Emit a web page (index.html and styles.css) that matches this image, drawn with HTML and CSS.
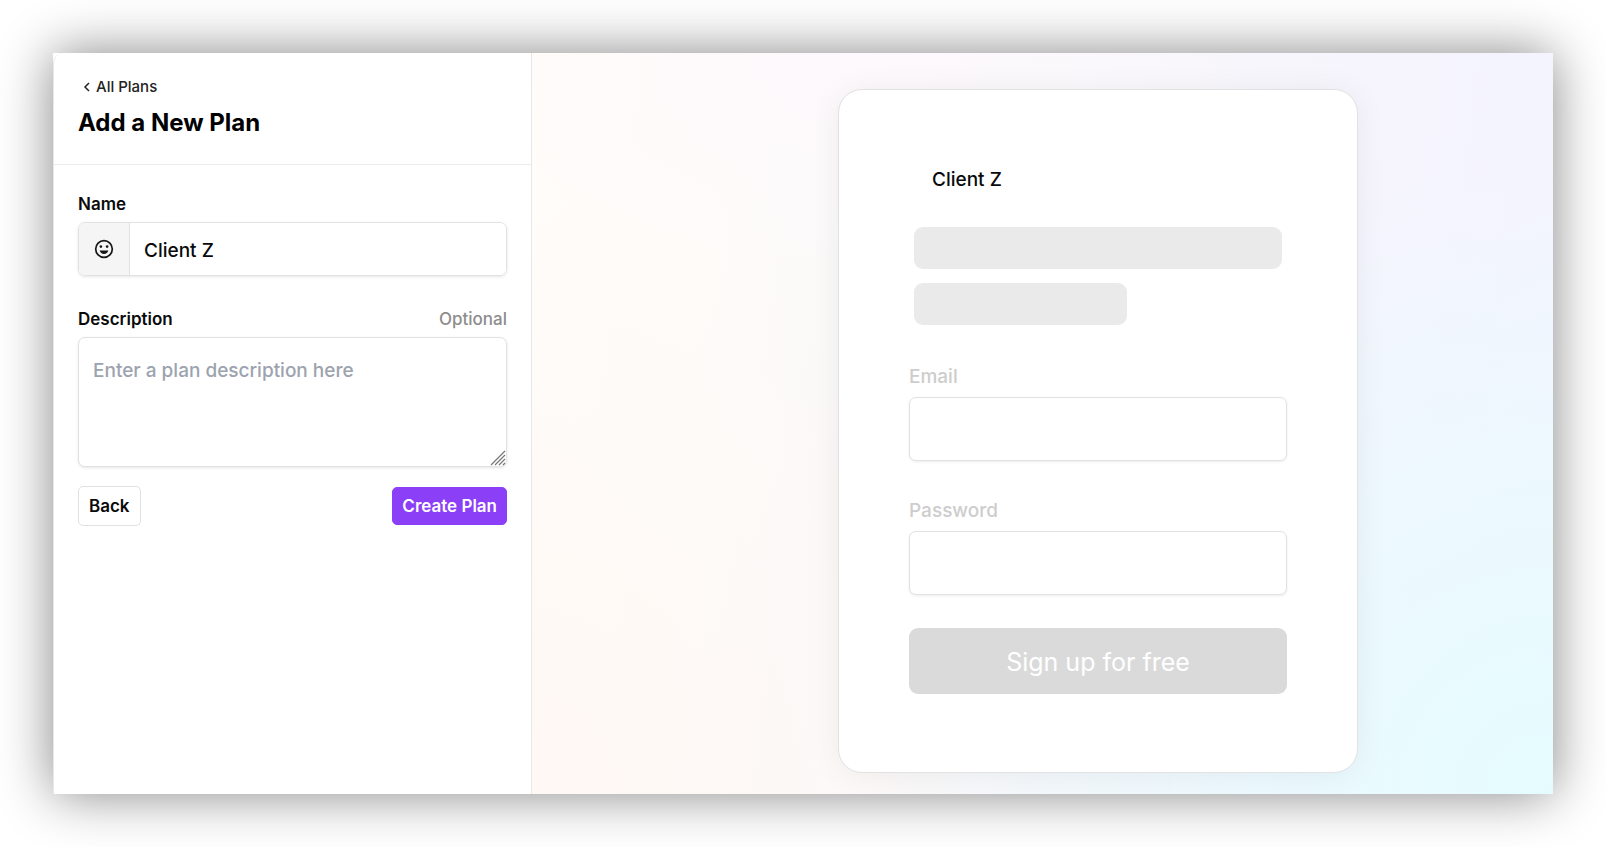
FILE: index.html
```html
<!DOCTYPE html>
<html lang="en">
<head>
<meta charset="utf-8">
<meta name="viewport" content="width=device-width, initial-scale=1">
<title>Add a New Plan</title>
<link rel="stylesheet" href="styles.css">
</head>
<body>
<div class="window">
  <main class="editor">
    <header class="editor-header">
      <a class="back-link" href="#plans">
        <svg class="chevron" viewBox="0 0 8 12" aria-hidden="true"><path d="M6 2 2 6l4 4"/></svg>
        All Plans
      </a>
      <h1 class="title">Add a New Plan</h1>
    </header>
    <form class="plan-form">
      <div class="field">
        <div class="label-row"><label for="name">Name</label></div>
        <div class="name-group">
          <button class="emoji-button" type="button" aria-label="Choose an emoji">
            <svg class="smiley" viewBox="0 0 20 20" aria-hidden="true">
              <circle class="smiley-face" cx="10" cy="10" r="8.3"/>
              <circle cx="6.900" cy="7.600" r="1.300"/>
              <circle cx="13.100" cy="7.600" r="1.300"/>
              <path d="M5.700 11.400h8.600c-.5 2.200-2.200 3.500-4.300 3.500s-3.800-1.300-4.300-3.500z"/>
            </svg>
          </button>
          <input class="name-input" id="name" type="text" value="Client Z">
        </div>
      </div>
      <div class="field">
        <div class="label-row">
          <label for="description">Description</label>
          <span class="optional">Optional</span>
        </div>
        <div class="description-group">
          <textarea class="description" id="description" placeholder="Enter a plan description here"></textarea>
          <svg class="grip" viewBox="0 0 16 16" aria-hidden="true"><path d="M1 15 15 1M5 15 15 5M9 15l6-6M13 15l2-2"/></svg>
        </div>
      </div>
      <div class="actions">
        <button class="button" type="button">Back</button>
        <button class="button button-primary" type="submit">Create Plan</button>
      </div>
    </form>
  </main>
  <section class="preview" aria-label="Preview">
    <form class="card">
      <p class="plan-name">Client Z</p>
      <div class="placeholder"></div>
      <div class="placeholder placeholder-short"></div>
      <div class="signup-fields">
        <div class="signup-field">
          <label for="email">Email</label>
          <input class="signup-input" id="email" type="email">
        </div>
        <div class="signup-field">
          <label for="password">Password</label>
          <input class="signup-input" id="password" type="password">
        </div>
      </div>
      <button class="signup-button" type="button">Sign up for free</button>
    </form>
  </section>
</div>
</body>
</html>
```
FILE: styles.css
```css
*,
*::before,
*::after {
  box-sizing: border-box;
}

body {
  display: flex;
  min-height: 100vh;
  margin: 0;
  padding: 53px;
  background: #fff;
  color: #0a0a0a;
  font-family: Inter, "Liberation Sans", sans-serif;
}

button,
input,
textarea {
  margin: 0;
  color: inherit;
  font: inherit;
}

.window {
  display: flex;
  flex: 1;
  background: #fff;
  box-shadow: 0 0 50px rgba(0, 0, 0, 0.48);
}

.editor {
  flex: 0 0 479px;
  border-right: 1px solid #e8e8e8;
  border-left: 1px solid #e8e8e8;
  border-top-left-radius: 10px;
}

.editor-header {
  height: 112px;
  padding: 22px 24px 0;
  border-bottom: 1px solid #ececec;
}

.back-link {
  display: flex;
  align-items: center;
  gap: 5px;
  padding-left: 5px;
  color: #222;
  font-size: 15px;
  font-weight: 500;
  line-height: 24px;
  text-decoration: none;
}

.chevron {
  width: 8px;
  height: 12px;
  fill: none;
  stroke: #222;
  stroke-width: 1.5;
}

.title {
  margin: 6px 0 0;
  color: #000;
  font-size: 24px;
  font-weight: 700;
  line-height: 36px;
}

.plan-form {
  padding: 27px 24px;
}

.field {
  margin-bottom: 31px;
}

.label-row {
  display: flex;
  justify-content: space-between;
  margin-bottom: 6px;
  font-size: 17px;
  font-weight: 600;
  line-height: 24px;
}

.optional {
  color: #8c8c8c;
  font-weight: 500;
}

.name-group {
  display: flex;
  height: 54px;
  overflow: hidden;
  border: 1px solid #e2e2e2;
  border-radius: 7px;
  box-shadow: 0 1px 3px rgba(0, 0, 0, 0.1);
}

.emoji-button {
  display: flex;
  align-items: center;
  justify-content: center;
  flex: 0 0 51px;
  padding: 0;
  border: 0;
  border-right: 1px solid #e2e2e2;
  background: #f5f5f5;
}

.smiley {
  width: 20px;
  height: 20px;
  fill: #171717;
}

.smiley-face {
  fill: none;
  stroke: #171717;
  stroke-width: 1.7;
}

.name-input {
  flex: 1;
  min-width: 0;
  padding: 2px 14px 0;
  border: 0;
  background: #fff;
  font-size: 19px;
  font-weight: 500;
}

.description-group {
  position: relative;
}

.description {
  display: block;
  width: 100%;
  height: 130px;
  padding: 19px 14px;
  border: 1px solid #e2e2e2;
  border-radius: 7px;
  box-shadow: 0 1px 3px rgba(0, 0, 0, 0.1);
  font-size: 19px;
  font-weight: 500;
  line-height: 28px;
  resize: none;
}

.description::placeholder {
  color: #9ca3af;
}

.grip {
  position: absolute;
  right: 1px;
  bottom: 1px;
  width: 16px;
  height: 16px;
  fill: none;
  stroke: #777;
  stroke-width: 1.2;
  pointer-events: none;
}

.actions {
  display: flex;
  align-items: center;
  justify-content: space-between;
  margin-top: -12px;
}

.button {
  height: 40px;
  padding: 0 10px;
  border: 1px solid #e2e2e2;
  border-radius: 5px;
  background: #fff;
  font-size: 17px;
  font-weight: 600;
}

.button-primary {
  height: 38px;
  padding: 0 9px;
  border-color: #8b3ff6;
  background: #8b3ff6;
  color: #fff;
}

.preview {
  flex: 1;
  padding: 36px 13% 21px 20.4%;
  background:
    radial-gradient(ellipse 65% 85% at 100% 100%, #e5fcff 0%, rgba(231, 251, 255, 0.7) 40%, rgba(236, 250, 252, 0) 100%),
    radial-gradient(ellipse 50% 80% at 0% 100%, #fff8f4 0%, rgba(255, 249, 245, 0) 100%),
    radial-gradient(ellipse 40% 30% at 32% 0%, #fdf9fd 0%, rgba(253, 249, 253, 0) 100%),
    linear-gradient(97deg, #fffcf9 0%, #fefbf9 18%, #faf9f9 32%, #f6f5fd 75%, #f3f3ff 100%);
}

.card {
  height: 684px;
  padding: 73px 70px 0;
  border: 1px solid #e2e2e2;
  border-radius: 24px;
  background: #fff;
  box-shadow: 0 2px 32px rgba(0, 0, 0, 0.06);
}

.plan-name {
  margin: 0 0 30px;
  padding-left: 23px;
  font-size: 19px;
  font-weight: 500;
  line-height: 34px;
}

.placeholder {
  height: 42px;
  margin: 0 5px 14px;
  border-radius: 9px;
  background: #eaeaea;
}

.placeholder-short {
  width: 213px;
  margin-bottom: 38px;
}

.signup-fields {
  display: flex;
  flex-direction: column;
  gap: 36px;
  margin-bottom: 33px;
}

.signup-field {
  display: flex;
  flex-direction: column;
  gap: 6px;
  color: #cdcdcd;
  font-size: 19px;
  font-weight: 500;
  line-height: 28px;
}

.signup-input {
  width: 100%;
  height: 64px;
  padding: 0 14px;
  border: 1px solid #e2e2e2;
  border-radius: 7px;
  background: #fff;
  box-shadow: 0 1px 3px rgba(0, 0, 0, 0.08);
}

.signup-button {
  display: block;
  width: 100%;
  height: 66px;
  padding: 2px 0 0;
  border: 0;
  border-radius: 9px;
  background: #dadada;
  color: #fff;
  font-size: 25px;
}
```
